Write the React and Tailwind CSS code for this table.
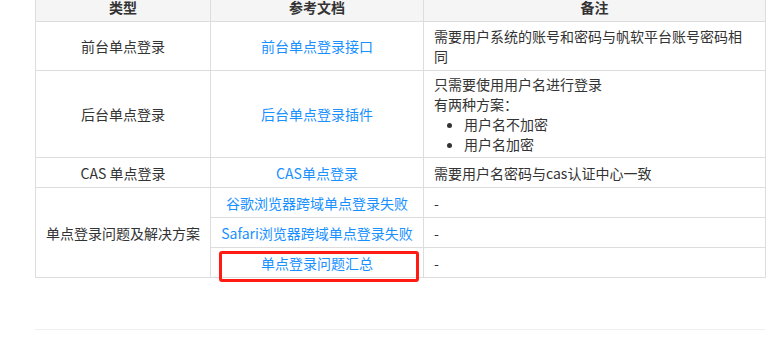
import React from "react";

const font = { fontFamily: '"Noto Sans CJK SC", "Noto Sans", sans-serif' };

const cell = "border border-[#dddddd] px-[10px] py-0 align-middle";
const link = "text-[#1890ff]";

export default function App() {
  return (
    <div className="w-[784px] h-[347px] overflow-hidden bg-white text-[14px] leading-[20px] text-[#333333]" style={font}>
      <div className="-mt-[9px] pl-[35px]">
        <table className="table-fixed border-collapse w-[730px]">
          <colgroup>
            <col className="w-[175px]" />
            <col className="w-[213px]" />
            <col className="w-[342px]" />
          </colgroup>
          <thead>
            <tr className="h-[30px] bg-[#f5f5f5]">
              <th className={`${cell} text-center font-bold`}>类型</th>
              <th className={`${cell} text-center font-bold`}>参考文档</th>
              <th className={`${cell} text-center font-bold`}>备注</th>
            </tr>
          </thead>
          <tbody>
            <tr className="h-[49px]">
              <td className={`${cell} text-center`}>前台单点登录</td>
              <td className={`${cell} text-center`}>
                <a className={link}>前台单点登录接口</a>
              </td>
              <td className={cell}>需要用户系统的账号和密码与帆软平台账号密码相同</td>
            </tr>
            <tr className="h-[87px]">
              <td className={`${cell} text-center`}>后台单点登录</td>
              <td className={`${cell} text-center`}>
                <a className={link}>后台单点登录插件</a>
              </td>
              <td className={cell}>
                <div>只需要使用用户名进行登录</div>
                <div>有两种方案：</div>
                <ul className="list-disc pl-[30px]">
                  <li>用户名不加密</li>
                  <li>用户名加密</li>
                </ul>
              </td>
            </tr>
            <tr className="h-[30px]">
              <td className={`${cell} text-center`}>CAS 单点登录</td>
              <td className={`${cell} text-center`}>
                <a className={link}>CAS单点登录</a>
              </td>
              <td className={cell}>需要用户名密码与cas认证中心一致</td>
            </tr>
            <tr className="h-[30px]">
              <td rowSpan={3} className={`${cell} text-center`}>单点登录问题及解决方案</td>
              <td className={`${cell} text-center`}>
                <a className={link}>谷歌浏览器跨域单点登录失败</a>
              </td>
              <td className={cell}>-</td>
            </tr>
            <tr className="h-[30px]">
              <td className={`${cell} text-center`}>
                <a className={link}>Safari浏览器跨域单点登录失败</a>
              </td>
              <td className={cell}>-</td>
            </tr>
            <tr className="h-[30px]">
              <td className={`${cell} text-center relative`}>
                <a className={link}>单点登录问题汇总</a>
                {/* highlight frame around the summary link */}
                <div className="absolute left-[8px] top-[3px] w-[200px] h-[31px] border-[3px] border-[#ff1a12] rounded-[3px] pointer-events-none" />
              </td>
              <td className={cell}>-</td>
            </tr>
          </tbody>
        </table>
        <div className="mt-[51px] w-[730px] border-t border-[#eeeeee]" />
      </div>
    </div>
  );
}
